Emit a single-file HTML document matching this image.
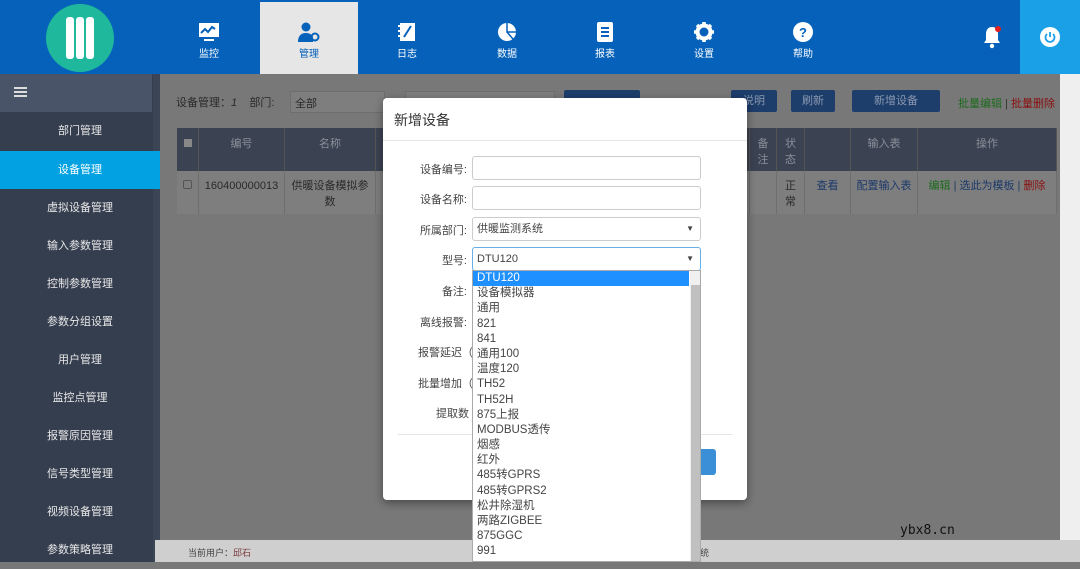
<!DOCTYPE html>
<html><head><meta charset="utf-8"><style>
*{margin:0;padding:0;box-sizing:border-box}
body{width:1080px;height:562px;overflow:hidden;position:relative;background:#787878;font-family:"Liberation Sans","Noto Sans CJK SC",sans-serif;font-size:11px}
.a{position:absolute}
.nav{top:0;height:74px;width:98px;text-align:center;color:#fff;font-size:10px}
.nav svg{display:block;margin:22px auto 3px}
.side{left:0;width:160px;height:38px;line-height:38px;text-align:center;color:#e8e8e8;font-size:11px}
.btn{background:#1d3d6b;color:#8a98b0;height:22px;line-height:22px;text-align:center;border-radius:2px;font-size:11px;top:90px}
.th{top:128px;height:43px;background:#3b4352;color:#8a8f99;text-align:center;padding-top:8px;border-right:1px solid #555;line-height:16px}
.td{top:171px;height:43px;background:#7e7e7e;color:#2a2a2a;text-align:center;padding-top:7px;border-right:1px solid #6e6e6e;line-height:16px}
.lbl{color:#444;text-align:right;width:86px;left:381px;font-size:11px}
.inp{left:472px;width:229px;height:24px;border:1px solid #ccc;border-radius:3px;background:#fff;font-size:11px;color:#444;line-height:22px;padding-left:4px}
.opt{left:0;height:15.2px;line-height:15.2px;padding-left:4px;color:#444;font-size:11.5px;width:216px;position:relative}
</style></head><body>
<!-- header -->
<div class="a" style="left:0;top:0;width:1080px;height:74px;background:#0561b9"></div>
<div class="a" style="left:46px;top:4px;width:68px;height:68px;border-radius:50%;background:#1fb89c"></div>
<div class="a" style="left:66px;top:17px;width:8px;height:42px;background:#fff;border-radius:3px"></div>
<div class="a" style="left:76px;top:17px;width:8px;height:42px;background:#fff;border-radius:3px"></div>
<div class="a" style="left:86px;top:17px;width:8px;height:42px;background:#fff;border-radius:3px"></div>
<div class="a" style="left:260px;top:2px;width:98px;height:72px;background:#e6e6e6"></div>
<div class="a nav" style="left:160px"><svg width="22" height="20" viewBox="0 0 22 20"><rect x="1" y="1" width="20" height="14" fill="#fff"/><path d="M3 11l4-4 3 3 4-5 3 2" stroke="#0561b9" stroke-width="2" fill="none"/><rect x="6" y="17" width="10" height="2" fill="#fff"/></svg>监控</div>
<div class="a nav" style="left:260px;color:#0561b9"><svg width="22" height="20" viewBox="0 0 22 20"><circle cx="8" cy="5" r="4.5" fill="#0561b9"/><path d="M0 20c0-7 4-9 8-9s6 2 7 4v5z" fill="#0561b9"/><circle cx="17" cy="15" r="3.5" fill="none" stroke="#0561b9" stroke-width="2"/></svg>管理</div>
<div class="a nav" style="left:358px"><svg width="18" height="20" viewBox="0 0 18 20"><rect x="2" y="1" width="15" height="18" fill="#fff"/><path d="M6 15l7-11" stroke="#0561b9" stroke-width="2"/><rect x="0" y="3" width="3" height="2" fill="#fff"/><rect x="0" y="8" width="3" height="2" fill="#fff"/><rect x="0" y="13" width="3" height="2" fill="#fff"/></svg>日志</div>
<div class="a nav" style="left:458px"><svg width="20" height="20" viewBox="0 0 20 20"><circle cx="10" cy="10" r="9" fill="#fff"/><path d="M10 1v9h9M10 10l6 7" stroke="#0561b9" stroke-width="1.5" fill="none"/></svg>数据</div>
<div class="a nav" style="left:556px"><svg width="16" height="20" viewBox="0 0 16 20"><rect x="0" y="0" width="16" height="20" rx="2" fill="#fff"/><path d="M4 6h8M4 10h8M4 14h8" stroke="#0561b9" stroke-width="2"/></svg>报表</div>
<div class="a nav" style="left:655px"><svg width="20" height="20" viewBox="0 0 20 20"><circle cx="10" cy="10" r="6.5" fill="none" stroke="#fff" stroke-width="4"/><path d="M10 0v5M10 15v5M0 10h5M15 10h5M3 3l3 3M14 14l3 3M17 3l-3 3M3 17l3-3" stroke="#fff" stroke-width="3.5"/></svg>设置</div>
<div class="a nav" style="left:754px"><svg width="20" height="20" viewBox="0 0 20 20"><circle cx="10" cy="10" r="10" fill="#fff"/><text x="10" y="15" font-size="13" font-weight="bold" text-anchor="middle" fill="#0561b9" font-family="Liberation Sans">?</text></svg>帮助</div>
<svg class="a" style="left:982px;top:25px" width="22" height="24" viewBox="0 0 22 24"><path d="M10 2c-4 0-6 3-6 7v6l-2 3h16l-2-3V9c0-4-2-7-6-7z" fill="#fff"/><circle cx="10" cy="21" r="2.2" fill="#fff"/><circle cx="16" cy="4" r="3" fill="#e02020"/></svg>
<div class="a" style="left:1020px;top:0;width:60px;height:74px;background:#1aa0e6"></div>
<svg class="a" style="left:1040px;top:27px" width="20" height="20" viewBox="0 0 20 20"><circle cx="10" cy="10" r="10" fill="#fff"/><path d="M7 7a4.5 4.5 0 1 0 6 0" stroke="#1aa0e6" stroke-width="1.8" fill="none"/><path d="M10 5v5" stroke="#1aa0e6" stroke-width="1.8"/></svg>
<!-- sidebar -->
<div class="a" style="left:0;top:74px;width:160px;height:488px;background:#353e4f"></div>
<div class="a" style="left:153px;top:74px;width:7px;height:488px;background:#3c4556"></div>
<div class="a" style="left:0;top:74px;width:152px;height:38px;background:#4a5468"></div>
<div class="a" style="left:14px;top:87px;width:13px;height:2px;background:#ddd;box-shadow:0 4px 0 #ddd,0 8px 0 #ddd"></div>
<div class="a side" style="top:112px">部门管理</div>
<div class="a side" style="top:151px;background:#02a2e2;color:#fff">设备管理</div>
<div class="a side" style="top:189px">虚拟设备管理</div>
<div class="a side" style="top:227px">输入参数管理</div>
<div class="a side" style="top:265px">控制参数管理</div>
<div class="a side" style="top:303px">参数分组设置</div>
<div class="a side" style="top:341px">用户管理</div>
<div class="a side" style="top:379px">监控点管理</div>
<div class="a side" style="top:417px">报警原因管理</div>
<div class="a side" style="top:455px">信号类型管理</div>
<div class="a side" style="top:493px">视频设备管理</div>
<div class="a side" style="top:531px">参数策略管理</div>
<!-- content -->
<div class="a" style="left:1060px;top:74px;width:20px;height:466px;background:#efefef"></div>
<div class="a" style="left:176px;top:94px;color:#2a2a2a">设备管理：<i>1</i>&nbsp;&nbsp;&nbsp;&nbsp;部门:</div>
<div class="a" style="left:290px;top:91px;width:95px;height:22px;background:#7e7e7e;border:1px solid #6e6e6e;color:#2a2a2a;padding:3px 4px">全部</div>
<div class="a" style="left:405px;top:91px;width:150px;height:22px;background:#7e7e7e;border:1px solid #6e6e6e"></div>
<div class="a btn" style="left:564px;width:76px"></div>
<div class="a btn" style="left:731px;width:46px">说明</div>
<div class="a btn" style="left:791px;width:44px">刷新</div>
<div class="a btn" style="left:852px;width:88px">新增设备</div>
<div class="a" style="left:958px;top:95px;color:#1e6a1e">批量编辑 <span style="color:#333">|</span> <span style="color:#8a1010">批量删除</span></div>
<div class="a th" style="left:177px;width:22px"><span style="display:inline-block;width:8px;height:8px;background:#888"></span></div>
<div class="a th" style="left:199px;width:86px">编号</div>
<div class="a th" style="left:285px;width:91px">名称</div>
<div class="a th" style="left:376px;width:374px"></div>
<div class="a th" style="left:750px;width:27px">备<br>注</div>
<div class="a th" style="left:777px;width:28px">状<br>态</div>
<div class="a th" style="left:805px;width:46px"></div>
<div class="a th" style="left:851px;width:67px">输入表</div>
<div class="a th" style="left:918px;width:139px">操作</div>
<div class="a td" style="left:177px;width:22px"><span style="display:inline-block;width:9px;height:9px;border:1px solid #555;border-radius:2px"></span></div>
<div class="a td" style="left:199px;width:86px">160400000013</div>
<div class="a td" style="left:285px;width:91px">供暖设备模拟参<br>数</div>
<div class="a td" style="left:376px;width:374px"></div>
<div class="a td" style="left:750px;width:27px"></div>
<div class="a td" style="left:777px;width:28px">正<br>常</div>
<div class="a td" style="left:805px;width:46px;color:#1d3a6a">查看</div>
<div class="a td" style="left:851px;width:67px;color:#1d3a6a">配置输入表</div>
<div class="a td" style="left:918px;width:139px;color:#1d3a6a"><span style="color:#1e6a1e">编辑</span> | 选此为模板 | <span style="color:#8a1010">删除</span></div>
<!-- footer -->
<div class="a" style="left:155px;top:540px;width:925px;height:22px;background:#cfcfcf"></div>
<div class="a" style="left:188px;top:546px;font-size:9px;color:#444">当前用户：<span style="color:#7a3a3a">邱石</span></div>
<div class="a" style="left:700px;top:546px;font-size:9px;color:#444">统</div>
<div class="a" style="left:900px;top:523px;font-family:'DejaVu Sans Mono',monospace;font-size:13px;color:#111">ybx8.cn</div>
<!-- modal -->
<div class="a" style="left:383px;top:98px;width:364px;height:402px;background:#fff;border-radius:4px;box-shadow:0 3px 9px rgba(0,0,0,.4)"></div>
<div class="a" style="left:394px;top:110px;font-size:14px;color:#333">新增设备</div>
<div class="a" style="left:383px;top:140px;width:364px;height:1px;background:#e5e5e5"></div>
<div class="a" style="left:398px;top:434px;width:334px;height:1px;background:#e5e5e5"></div>
<div class="a" style="left:690px;top:449px;width:26px;height:26px;background:#3a8fd6;border-radius:0 3px 3px 0;color:#fff;line-height:26px;font-size:11px">交</div>
<div class="a lbl" style="top:161px">设备编号:</div>
<div class="a lbl" style="top:191px">设备名称:</div>
<div class="a lbl" style="top:222px">所属部门:</div>
<div class="a lbl" style="top:252px">型号:</div>
<div class="a lbl" style="top:283px">备注:</div>
<div class="a lbl" style="top:314px">离线报警:</div>
<div class="a lbl" style="top:344px;width:94px;left:379px;text-align:left;padding-left:39px">报警延迟（</div>
<div class="a lbl" style="top:375px;width:94px;left:379px;text-align:left;padding-left:39px">批量增加（</div>
<div class="a lbl" style="top:405px;width:94px;left:379px;text-align:left;padding-left:57px">提取数</div>
<div class="a inp" style="top:156px"></div>
<div class="a inp" style="top:186px"></div>
<div class="a inp" style="top:217px">供暖监测系统<span style="position:absolute;right:6px;font-size:8px">▼</span></div>
<div class="a inp" style="top:247px;border-color:#66afe9">DTU120<span style="position:absolute;right:6px;font-size:8px">▼</span></div>
<!-- dropdown -->
<div class="a" style="left:472px;top:270px;width:229px;height:292px;background:#fff;border:1px solid #aaa;overflow:hidden">
<div class="opt" style="background:#1e90ff;color:#fff;top:0">DTU120</div>
<div class="opt">设备模拟器</div><div class="opt">通用</div><div class="opt">821</div><div class="opt">841</div><div class="opt">通用100</div><div class="opt">温度120</div><div class="opt">TH52</div><div class="opt">TH52H</div><div class="opt">875上报</div><div class="opt">MODBUS透传</div><div class="opt">烟感</div><div class="opt">红外</div><div class="opt">485转GPRS</div><div class="opt">485转GPRS2</div><div class="opt">松井除湿机</div><div class="opt">两路ZIGBEE</div><div class="opt">875GGC</div><div class="opt">991</div>
<div class="a" style="left:217px;top:0;width:11px;height:292px;background:#f0f0f0"></div>
<div class="a" style="left:218px;top:14px;width:9px;height:278px;background:#c0c0c0"></div>
</div>
</body></html>
